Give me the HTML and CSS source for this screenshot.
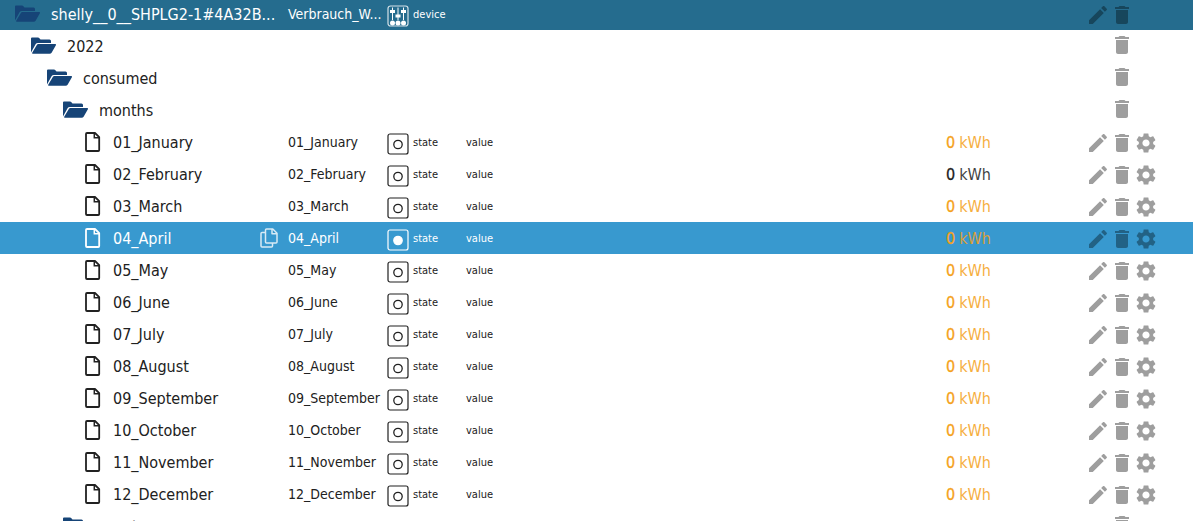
FILE: index.html
```html
<!DOCTYPE html>
<html lang="en">
<head>
<meta charset="utf-8">
<title>Objects</title>
<link rel="stylesheet" href="styles.css">
</head>
<body>
<svg class="sprite" aria-hidden="true">
  <symbol id="folder" viewBox="0 0 26 18"><path d="M0 1.500Q0 .5 1 .5H7Q7.800 .5 8.400 1.200L9.500 2.500H18.500Q20 2.500 20 4V6H6.800Q5.400 6 4.700 7.100L0 15.500Z"/><path d="M7.300 7.100H24.400Q25.400 7.300 24.900 8.200L20.600 15.700Q20 16.800 18.600 16.800H1.800Q.7 16.700 1.200 15.800L5.800 7.900Q6.300 7.100 7.300 7.100Z"/></symbol>
  <symbol id="file" viewBox="0 0 16 20"><path fill="none" stroke="currentColor" stroke-width="1.800" stroke-linejoin="round" d="M2 1H10L14.200 5.200V18Q14.200 19 13.200 19H2Q1 19 1 18V2Q1 1 2 1Z"/><path fill="none" stroke="currentColor" stroke-width="1.500" d="M9.300 1V5.800H14"/></symbol>
  <symbol id="copy" viewBox="0 0 18 20"><path fill="none" stroke="currentColor" stroke-width="1.500" stroke-linejoin="round" d="M6.500 1H12.800L17 5.200V14Q17 15 16 15H6.500Q5.500 15 5.500 14V2Q5.500 1 6.500 1ZM12 1V5.800H17M5.500 4.500H2Q1 4.500 1 5.500V18Q1 19 2 19H11.500Q12.500 19 12.500 18V15"/></symbol>
  <symbol id="state" viewBox="0 0 22 22"><rect x="1" y="1" width="20" height="20" rx="2" fill="none" stroke="currentColor" stroke-width="1.200"/><circle class="dot" cx="11" cy="11.500" r="4.200" stroke="currentColor" stroke-width="1.300"/></symbol>
  <symbol id="device" viewBox="0 0 22 22"><rect x="1" y="1" width="20" height="20" rx="2.500" fill="none" stroke="currentColor" stroke-width="1.200" opacity=".8"/><path fill="none" stroke="currentColor" stroke-width="1" d="M5.500 2.500V15M11 2.500V15M16.500 2.500V15"/><path d="M3 5H8V8H3ZM8.500 9.500H13.500V12.500H8.500ZM14 5H19V8H14Z"/><circle cx="5.500" cy="18" r="2.500"/><circle cx="11" cy="18" r="2.500"/><circle cx="16.500" cy="18" r="2.500"/></symbol>
  <symbol id="edit" viewBox="0 0 24 24"><path d="M3 17.250V21h3.750L17.810 9.940l-3.750-3.750L3 17.250zM20.710 7.040c.39-.39.39-1.020 0-1.410l-2.340-2.340c-.39-.39-1.020-.39-1.410 0l-1.830 1.830 3.750 3.750 1.830-1.830z"/></symbol>
  <symbol id="trash" viewBox="0 0 24 24"><path d="M6 19c0 1.100.9 2 2 2h8c1.100 0 2-.9 2-2V7H6v12zM19 4h-3.500l-1-1h-5l-1 1H5v2h14V4z"/></symbol>
  <symbol id="gear" viewBox="0 0 24 24"><path d="M19.140 12.940c.04-.3.060-.61.060-.94 0-.32-.02-.64-.07-.94l2.030-1.580c.18-.14.230-.41.120-.61l-1.920-3.320c-.12-.22-.37-.29-.59-.22l-2.390.96c-.5-.38-1.030-.7-1.620-.94l-.36-2.540c-.04-.24-.24-.41-.48-.41h-3.840c-.24 0-.43.170-.47.410l-.36 2.540c-.59.240-1.130.570-1.620.94l-2.390-.96c-.22-.08-.47 0-.59.220L2.740 8.870c-.12.210-.08.470.12.610l2.030 1.580c-.05.300-.09.630-.09.940s.02.640.07.940l-2.030 1.580c-.18.140-.23.410-.12.610l1.920 3.320c.12.220.37.290.59.220l2.390-.96c.5.380 1.030.700 1.620.940l.36 2.540c.05.240.24.410.48.410h3.840c.24 0 .44-.17.470-.41l.36-2.540c.59-.24 1.130-.56 1.620-.94l2.390.96c.22.080.47 0 .59-.22l1.920-3.320c.12-.22.070-.47-.12-.61l-2.010-1.580zM12 15.600c-1.980 0-3.600-1.620-3.600-3.600s1.620-3.600 3.600-3.600 3.600 1.620 3.600 3.600-1.620 3.600-3.600 3.600z"/></symbol>
</svg>
<main class="view">
<table class="tree">
<tbody>
<tr class="row row-device"><td class="name level-0"><svg class="folder"><use href="#folder"/></svg><span class="label">shelly__0__SHPLG2-1#4A32B...</span></td><td class="title">Verbrauch_W...</td><td class="type"><svg class="kind"><use href="#device"/></svg>device</td><td class="role"></td><td class="value"></td><td class="actions"><button aria-label="Edit"><svg><use href="#edit"/></svg></button><button aria-label="Delete"><svg><use href="#trash"/></svg></button></td></tr>
<tr class="row row-folder"><td class="name level-1"><svg class="folder"><use href="#folder"/></svg><span class="label">2022</span></td><td class="title"></td><td class="type"></td><td class="role"></td><td class="value"></td><td class="actions"><button class="only" aria-label="Delete"><svg><use href="#trash"/></svg></button></td></tr>
<tr class="row row-folder"><td class="name level-2"><svg class="folder"><use href="#folder"/></svg><span class="label">consumed</span></td><td class="title"></td><td class="type"></td><td class="role"></td><td class="value"></td><td class="actions"><button class="only" aria-label="Delete"><svg><use href="#trash"/></svg></button></td></tr>
<tr class="row row-folder"><td class="name level-3"><svg class="folder"><use href="#folder"/></svg><span class="label">months</span></td><td class="title"></td><td class="type"></td><td class="role"></td><td class="value"></td><td class="actions"><button class="only" aria-label="Delete"><svg><use href="#trash"/></svg></button></td></tr>
<tr class="row"><td class="name level-4"><svg class="file"><use href="#file"/></svg><span class="label">01_January</span></td><td class="title">01_January</td><td class="type"><svg class="kind"><use href="#state"/></svg>state</td><td class="role">value</td><td class="value"><b>0</b> <span class="unit">kWh</span></td><td class="actions"><button aria-label="Edit"><svg><use href="#edit"/></svg></button><button aria-label="Delete"><svg><use href="#trash"/></svg></button><button aria-label="Settings"><svg><use href="#gear"/></svg></button></td></tr>
<tr class="row"><td class="name level-4"><svg class="file"><use href="#file"/></svg><span class="label">02_February</span></td><td class="title">02_February</td><td class="type"><svg class="kind"><use href="#state"/></svg>state</td><td class="role">value</td><td class="value confirmed"><b>0</b> <span class="unit">kWh</span></td><td class="actions"><button aria-label="Edit"><svg><use href="#edit"/></svg></button><button aria-label="Delete"><svg><use href="#trash"/></svg></button><button aria-label="Settings"><svg><use href="#gear"/></svg></button></td></tr>
<tr class="row"><td class="name level-4"><svg class="file"><use href="#file"/></svg><span class="label">03_March</span></td><td class="title">03_March</td><td class="type"><svg class="kind"><use href="#state"/></svg>state</td><td class="role">value</td><td class="value"><b>0</b> <span class="unit">kWh</span></td><td class="actions"><button aria-label="Edit"><svg><use href="#edit"/></svg></button><button aria-label="Delete"><svg><use href="#trash"/></svg></button><button aria-label="Settings"><svg><use href="#gear"/></svg></button></td></tr>
<tr class="row row-selected"><td class="name level-4"><svg class="file"><use href="#file"/></svg><span class="label">04_April</span><button class="copy" aria-label="Copy"><svg><use href="#copy"/></svg></button></td><td class="title">04_April</td><td class="type"><svg class="kind"><use href="#state"/></svg>state</td><td class="role">value</td><td class="value"><b>0</b> <span class="unit">kWh</span></td><td class="actions"><button aria-label="Edit"><svg><use href="#edit"/></svg></button><button aria-label="Delete"><svg><use href="#trash"/></svg></button><button aria-label="Settings"><svg><use href="#gear"/></svg></button></td></tr>
<tr class="row"><td class="name level-4"><svg class="file"><use href="#file"/></svg><span class="label">05_May</span></td><td class="title">05_May</td><td class="type"><svg class="kind"><use href="#state"/></svg>state</td><td class="role">value</td><td class="value"><b>0</b> <span class="unit">kWh</span></td><td class="actions"><button aria-label="Edit"><svg><use href="#edit"/></svg></button><button aria-label="Delete"><svg><use href="#trash"/></svg></button><button aria-label="Settings"><svg><use href="#gear"/></svg></button></td></tr>
<tr class="row"><td class="name level-4"><svg class="file"><use href="#file"/></svg><span class="label">06_June</span></td><td class="title">06_June</td><td class="type"><svg class="kind"><use href="#state"/></svg>state</td><td class="role">value</td><td class="value"><b>0</b> <span class="unit">kWh</span></td><td class="actions"><button aria-label="Edit"><svg><use href="#edit"/></svg></button><button aria-label="Delete"><svg><use href="#trash"/></svg></button><button aria-label="Settings"><svg><use href="#gear"/></svg></button></td></tr>
<tr class="row"><td class="name level-4"><svg class="file"><use href="#file"/></svg><span class="label">07_July</span></td><td class="title">07_July</td><td class="type"><svg class="kind"><use href="#state"/></svg>state</td><td class="role">value</td><td class="value"><b>0</b> <span class="unit">kWh</span></td><td class="actions"><button aria-label="Edit"><svg><use href="#edit"/></svg></button><button aria-label="Delete"><svg><use href="#trash"/></svg></button><button aria-label="Settings"><svg><use href="#gear"/></svg></button></td></tr>
<tr class="row"><td class="name level-4"><svg class="file"><use href="#file"/></svg><span class="label">08_August</span></td><td class="title">08_August</td><td class="type"><svg class="kind"><use href="#state"/></svg>state</td><td class="role">value</td><td class="value"><b>0</b> <span class="unit">kWh</span></td><td class="actions"><button aria-label="Edit"><svg><use href="#edit"/></svg></button><button aria-label="Delete"><svg><use href="#trash"/></svg></button><button aria-label="Settings"><svg><use href="#gear"/></svg></button></td></tr>
<tr class="row"><td class="name level-4"><svg class="file"><use href="#file"/></svg><span class="label">09_September</span></td><td class="title">09_September</td><td class="type"><svg class="kind"><use href="#state"/></svg>state</td><td class="role">value</td><td class="value"><b>0</b> <span class="unit">kWh</span></td><td class="actions"><button aria-label="Edit"><svg><use href="#edit"/></svg></button><button aria-label="Delete"><svg><use href="#trash"/></svg></button><button aria-label="Settings"><svg><use href="#gear"/></svg></button></td></tr>
<tr class="row"><td class="name level-4"><svg class="file"><use href="#file"/></svg><span class="label">10_October</span></td><td class="title">10_October</td><td class="type"><svg class="kind"><use href="#state"/></svg>state</td><td class="role">value</td><td class="value"><b>0</b> <span class="unit">kWh</span></td><td class="actions"><button aria-label="Edit"><svg><use href="#edit"/></svg></button><button aria-label="Delete"><svg><use href="#trash"/></svg></button><button aria-label="Settings"><svg><use href="#gear"/></svg></button></td></tr>
<tr class="row"><td class="name level-4"><svg class="file"><use href="#file"/></svg><span class="label">11_November</span></td><td class="title">11_November</td><td class="type"><svg class="kind"><use href="#state"/></svg>state</td><td class="role">value</td><td class="value"><b>0</b> <span class="unit">kWh</span></td><td class="actions"><button aria-label="Edit"><svg><use href="#edit"/></svg></button><button aria-label="Delete"><svg><use href="#trash"/></svg></button><button aria-label="Settings"><svg><use href="#gear"/></svg></button></td></tr>
<tr class="row"><td class="name level-4"><svg class="file"><use href="#file"/></svg><span class="label">12_December</span></td><td class="title">12_December</td><td class="type"><svg class="kind"><use href="#state"/></svg>state</td><td class="role">value</td><td class="value"><b>0</b> <span class="unit">kWh</span></td><td class="actions"><button aria-label="Edit"><svg><use href="#edit"/></svg></button><button aria-label="Delete"><svg><use href="#trash"/></svg></button><button aria-label="Settings"><svg><use href="#gear"/></svg></button></td></tr>
<tr class="row row-folder"><td class="name level-3"><svg class="folder"><use href="#folder"/></svg><span class="label">quarters</span></td><td class="title"></td><td class="type"></td><td class="role"></td><td class="value"></td><td class="actions"><button class="only" aria-label="Delete"><svg><use href="#trash"/></svg></button></td></tr>
</tbody>
</table>
</main>
</body>
</html>
```
FILE: styles.css
```css
* { box-sizing: border-box; }

body {
  margin: 0;
  background: #fff;
  color: #212121;
  font-family: Tahoma, "DejaVu Sans Condensed", "Noto Sans", sans-serif;
  font-size: 16px;
}

.sprite { position: absolute; width: 0; height: 0; }

.view { height: 100vh; overflow: hidden; }

.tree, .tree tbody { display: block; }

/* the list is scrolled slightly past its first row */
.tree { margin-top: -2px; }

.row {
  --dot: none;
  display: grid;
  grid-template-columns: 288px 99px 79px 1fr 140px 107px;
  height: 32px;
}

.row td {
  display: flex;
  align-items: center;
  min-width: 0;
  padding: 0;
  white-space: nowrap;
}

.row svg { flex: none; fill: currentColor; }

.level-0 { --indent: 15px; }
.level-1 { --indent: 31px; }
.level-2 { --indent: 47px; }
.level-3 { --indent: 63px; }
.level-4 { --indent: 85px; }

.row .name { gap: 10px; padding-left: var(--indent); padding-right: 10px; }
.row .level-4 { gap: 12px; }

.folder { width: 26px; height: 18px; color: #164477; }
.file { width: 16px; height: 20px; }

.row .title { font-size: 14px; }
.row .type { gap: 4px; font-size: 11px; }
.row .role { font-size: 11px; }
.row .value { gap: 4px; color: #f5a21b; }
.value b { font-weight: 400; -webkit-text-stroke: 0.3px; }
.unit { opacity: 0.85; }
.row .confirmed { color: #212121; }

.kind { width: 22px; height: 22px; margin-top: 3px; }
.dot { fill: var(--dot); }

button {
  display: block;
  padding: 0;
  border: 0;
  background: none;
  color: inherit;
  cursor: pointer;
}

button svg { display: block; width: 24px; height: 24px; }

.row .actions { align-items: flex-start; padding-top: 5px; color: #9e9e9e; }
.row-folder .actions { padding-top: 3px; }
.only { margin-left: 24px; }

.copy { margin-left: auto; opacity: 0.8; }
.copy svg { width: 18px; height: 20px; }

.row-device { background: #256c8e; color: #fff; }
.row-device .actions { color: #17465c; }
.row-selected { --dot: #fff; background: #3899cf; color: #fff; }
.row-selected .actions { color: #226285; }
```
